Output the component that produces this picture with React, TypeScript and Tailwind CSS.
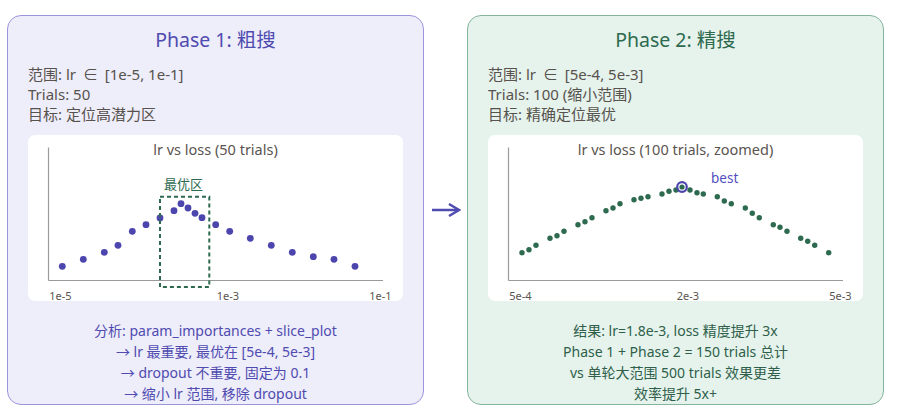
import React from "react";

const leftDots: [number, number][] = [
  [34.3, 131.3], [55.3, 124.3], [76.3, 117.3], [90, 110.3], [104.3, 96.3], [118, 89.7],
  [132, 83], [146, 75.7], [153, 68.7], [160, 73], [167, 78.3], [174, 82.7], [187.7, 89.7],
  [201.7, 96.3], [222.3, 103.3], [243.3, 110.3], [264.3, 117.3], [285.3, 121.7], [306, 124.3],
  [327, 131.3],
];

const rightDots: [number, number][] = [
  [34, 117.7], [41, 114.7], [48, 110.3], [62, 103.3], [69, 100.7], [76, 96.3], [90, 89.7],
  [97, 86.7], [104, 82.7], [118, 75.7], [125, 73], [132, 68.7], [146, 64.7], [153, 63.3],
  [160, 61.7], [174, 59], [181, 56.3], [188, 55], [202, 55], [209, 57.7], [215.3, 59],
  [229.3, 61.7], [236.3, 66], [243.3, 68.7], [257.3, 73], [264.3, 78.3], [271.3, 82.7],
  [285.3, 89.7], [292, 92.3], [299, 96.3], [312.7, 103.3], [319.7, 106.3], [326.7, 110.3],
  [340.7, 117.7],
];

const FONT = '"Noto Sans", "Noto Sans CJK SC", sans-serif';

function Axes({ title, labels }: { title: string; labels: [string, string, string] }) {
  return (
    <>
      <line x1={20.5} y1={12.5} x2={20.5} y2={145.5} stroke="#9a9a9a" strokeWidth={1.2} />
      <line x1={20.5} y1={145.5} x2={355} y2={145.5} stroke="#9a9a9a" strokeWidth={1.2} />
      <text x={187.5} y={20} textAnchor="middle" fontSize={14.5} fill="#5a544f" fontFamily={FONT}>
        {title}
      </text>
      <text x={32.5} y={164.5} textAnchor="middle" fontSize={11} fill="#5a544f" fontFamily={FONT}>
        {labels[0]}
      </text>
      <text x={200} y={164.5} textAnchor="middle" fontSize={11} fill="#5a544f" fontFamily={FONT}>
        {labels[1]}
      </text>
      <text x={352.5} y={164.5} textAnchor="middle" fontSize={11} fill="#5a544f" fontFamily={FONT}>
        {labels[2]}
      </text>
    </>
  );
}

function LeftChart() {
  return (
    <svg width={375} height={166} viewBox="0 0 375 166" className="block overflow-visible">
      <Axes title="lr vs loss (50 trials)" labels={["1e-5", "1e-3", "1e-1"]} />
      {leftDots.map(([x, y], i) => (
        <circle key={i} cx={x} cy={y} r={3.4} fill="#4c45ae" />
      ))}
      <rect
        x={132}
        y={61.7}
        width={49.3}
        height={90.3}
        fill="none"
        stroke="#2d6a4f"
        strokeWidth={2}
        strokeDasharray="4 3"
      />
      <text x={155.5} y={54} textAnchor="middle" fontSize={13} fill="#2d6a4f" fontFamily={FONT}>
        最优区
      </text>
    </svg>
  );
}

function RightChart() {
  return (
    <svg width={375} height={166} viewBox="0 0 375 166" className="block overflow-visible">
      <Axes title="lr vs loss (100 trials, zoomed)" labels={["5e-4", "2e-3", "5e-3"]} />
      {rightDots.map(([x, y], i) => (
        <circle key={i} cx={x} cy={y} r={2.7} fill="#2d6a4f" />
      ))}
      <circle cx={194} cy={52} r={4.8} fill="none" stroke="#4c45ae" strokeWidth={2.2} />
      <circle cx={194} cy={52} r={2.6} fill="#2d6a4f" />
      <text x={223} y={47.5} fontSize={13.5} fill="#5250c0" fontFamily={FONT}>
        best
      </text>
    </svg>
  );
}

export default function App() {
  return (
    <div
      className="w-[902px] h-[419px] bg-white flex items-center pl-[7px]"
      style={{ fontFamily: FONT }}
    >
      {/* Phase 1 */}
      <div className="w-[417px] h-[390px] rounded-[14px] border border-[#9b96dc] bg-[#eeedfa] flex flex-col items-center pt-[12px] shrink-0">
        <div className="text-[19.5px] leading-[24px] text-[#4f4bb0]">Phase 1: 粗搜</div>
        <div className="self-stretch pl-[20px] mt-[12px] text-[15px] leading-[20px] text-[#57524d]">
          <div>
            范围: lr <span className="px-[3px]">∈</span> [1e-5, 1e-1]
          </div>
          <div>Trials: 50</div>
          <div>目标: 定位高潜力区</div>
        </div>
        <div className="mt-[11px] w-[375px] h-[166px] rounded-[7px] bg-white">
          <LeftChart />
        </div>
        <div className="mt-[19px] text-[14px] leading-[21px] text-[#4f4bb0] text-center">
          <div>分析: param_importances + slice_plot</div>
          <div>→ lr 最重要, 最优在 [5e-4, 5e-3]</div>
          <div>→ dropout 不重要, 固定为 0.1</div>
          <div>→ 缩小 lr 范围, 移除 dropout</div>
        </div>
      </div>

      {/* Arrow */}
      <div className="w-[43px] flex items-center justify-center shrink-0">
        <svg width={30} height={16} viewBox="0 0 30 16">
          <line x1={1} y1={8} x2={28} y2={8} stroke="#4f4bb0" strokeWidth={2.5} />
          <polyline
            points="18,2 28,8 18,14"
            fill="none"
            stroke="#4f4bb0"
            strokeWidth={2.5}
            strokeLinejoin="miter"
          />
        </svg>
      </div>

      {/* Phase 2 */}
      <div className="w-[417px] h-[390px] rounded-[14px] border border-[#84b49c] bg-[#e5f3ec] flex flex-col items-center pt-[12px] shrink-0">
        <div className="text-[19.5px] leading-[24px] text-[#2d6a4f]">Phase 2: 精搜</div>
        <div className="self-stretch pl-[20px] mt-[12px] text-[15px] leading-[20px] text-[#57524d]">
          <div>
            范围: lr <span className="px-[3px]">∈</span> [5e-4, 5e-3]
          </div>
          <div>Trials: 100 (缩小范围)</div>
          <div>目标: 精确定位最优</div>
        </div>
        <div className="mt-[11px] w-[375px] h-[166px] rounded-[7px] bg-white">
          <RightChart />
        </div>
        <div className="mt-[19px] text-[14px] leading-[21px] text-[#2f5f4a] text-center">
          <div>结果: lr=1.8e-3, loss 精度提升 3x</div>
          <div>Phase 1 + Phase 2 = 150 trials 总计</div>
          <div>vs 单轮大范围 500 trials 效果更差</div>
          <div>效率提升 5x+</div>
        </div>
      </div>
    </div>
  );
}
